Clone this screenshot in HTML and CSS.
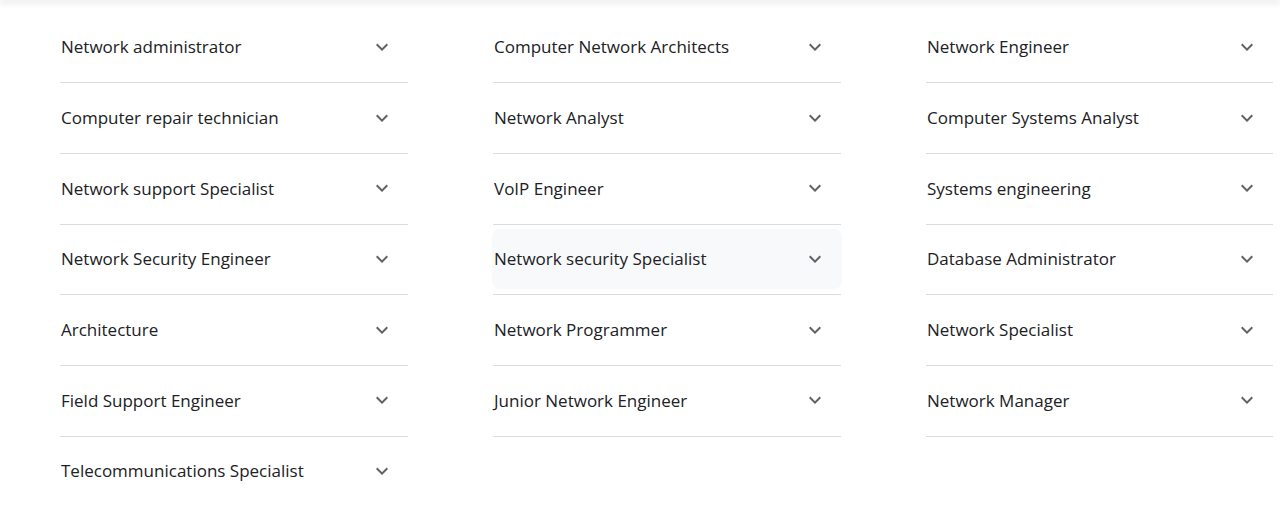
FILE: index.html
```html
<!DOCTYPE html>
<html>
<head>
<meta charset="utf-8">
<link rel="stylesheet" href="styles.css">
</head>
<body>
<div class="topbar"></div>
<main class="grid">
  <div class="col">
    <div class="row"><div class="item"><span>Network administrator</span><svg class="chev" viewBox="0 0 24 24"><path d="M16.59 8.59L12 13.17 7.41 8.59 6 10l6 6 6-6z"/></svg></div></div>
    <div class="row"><div class="item"><span>Computer repair technician</span><svg class="chev" viewBox="0 0 24 24"><path d="M16.59 8.59L12 13.17 7.41 8.59 6 10l6 6 6-6z"/></svg></div></div>
    <div class="row"><div class="item"><span>Network support Specialist</span><svg class="chev" viewBox="0 0 24 24"><path d="M16.59 8.59L12 13.17 7.41 8.59 6 10l6 6 6-6z"/></svg></div></div>
    <div class="row"><div class="item"><span>Network Security Engineer</span><svg class="chev" viewBox="0 0 24 24"><path d="M16.59 8.59L12 13.17 7.41 8.59 6 10l6 6 6-6z"/></svg></div></div>
    <div class="row"><div class="item"><span>Architecture</span><svg class="chev" viewBox="0 0 24 24"><path d="M16.59 8.59L12 13.17 7.41 8.59 6 10l6 6 6-6z"/></svg></div></div>
    <div class="row"><div class="item"><span>Field Support Engineer</span><svg class="chev" viewBox="0 0 24 24"><path d="M16.59 8.59L12 13.17 7.41 8.59 6 10l6 6 6-6z"/></svg></div></div>
    <div class="row last"><div class="item"><span>Telecommunications Specialist</span><svg class="chev" viewBox="0 0 24 24"><path d="M16.59 8.59L12 13.17 7.41 8.59 6 10l6 6 6-6z"/></svg></div></div>
  </div>
  <div class="col">
    <div class="row"><div class="item"><span>Computer Network Architects</span><svg class="chev" viewBox="0 0 24 24"><path d="M16.59 8.59L12 13.17 7.41 8.59 6 10l6 6 6-6z"/></svg></div></div>
    <div class="row"><div class="item"><span>Network Analyst</span><svg class="chev" viewBox="0 0 24 24"><path d="M16.59 8.59L12 13.17 7.41 8.59 6 10l6 6 6-6z"/></svg></div></div>
    <div class="row"><div class="item"><span>VoIP Engineer</span><svg class="chev" viewBox="0 0 24 24"><path d="M16.59 8.59L12 13.17 7.41 8.59 6 10l6 6 6-6z"/></svg></div></div>
    <div class="row"><div class="item hover"><span>Network security Specialist</span><svg class="chev" viewBox="0 0 24 24"><path d="M16.59 8.59L12 13.17 7.41 8.59 6 10l6 6 6-6z"/></svg></div></div>
    <div class="row"><div class="item"><span>Network Programmer</span><svg class="chev" viewBox="0 0 24 24"><path d="M16.59 8.59L12 13.17 7.41 8.59 6 10l6 6 6-6z"/></svg></div></div>
    <div class="row"><div class="item"><span>Junior Network Engineer</span><svg class="chev" viewBox="0 0 24 24"><path d="M16.59 8.59L12 13.17 7.41 8.59 6 10l6 6 6-6z"/></svg></div></div>
  </div>
  <div class="col">
    <div class="row"><div class="item"><span>Network Engineer</span><svg class="chev" viewBox="0 0 24 24"><path d="M16.59 8.59L12 13.17 7.41 8.59 6 10l6 6 6-6z"/></svg></div></div>
    <div class="row"><div class="item"><span>Computer Systems Analyst</span><svg class="chev" viewBox="0 0 24 24"><path d="M16.59 8.59L12 13.17 7.41 8.59 6 10l6 6 6-6z"/></svg></div></div>
    <div class="row"><div class="item"><span>Systems engineering</span><svg class="chev" viewBox="0 0 24 24"><path d="M16.59 8.59L12 13.17 7.41 8.59 6 10l6 6 6-6z"/></svg></div></div>
    <div class="row"><div class="item"><span>Database Administrator</span><svg class="chev" viewBox="0 0 24 24"><path d="M16.59 8.59L12 13.17 7.41 8.59 6 10l6 6 6-6z"/></svg></div></div>
    <div class="row"><div class="item"><span>Network Specialist</span><svg class="chev" viewBox="0 0 24 24"><path d="M16.59 8.59L12 13.17 7.41 8.59 6 10l6 6 6-6z"/></svg></div></div>
    <div class="row"><div class="item"><span>Network Manager</span><svg class="chev" viewBox="0 0 24 24"><path d="M16.59 8.59L12 13.17 7.41 8.59 6 10l6 6 6-6z"/></svg></div></div>
  </div>
</main>
</body>
</html>
```

FILE: styles.css
```css
* { box-sizing: border-box; }
html, body { margin: 0; padding: 0; background: #fff; }
body {
  width: 1280px;
  height: 514px;
  overflow: hidden;
  font-family: "Open Sans", "Liberation Sans", sans-serif;
  color: #202124;
}
.topbar {
  height: 0;
  box-shadow: 0 1px 6px 1px rgba(60, 64, 67, 0.25);
}
.grid {
  display: grid;
  grid-template-columns: 348px 348px 347px;
  column-gap: 85px;
  padding: 12.5px 0 0 60px;
}
.col { display: flex; flex-direction: column; }
.row {
  height: 70.7px;
  border-bottom: 1px solid #dadce0;
  padding: 4px 0 5px;
}
.row.last { border-bottom: none; }
.item {
  height: 60.7px;
  display: flex;
  align-items: center;
  justify-content: space-between;
  padding: 0 14px 0 1px;
  border-radius: 8px;
  font-size: 17px;
  color: #202124;
}
.item.hover {
  background: #f8f9fa;
  margin: 0 -1px;
  padding-left: 2px;
  padding-right: 15px;
}
.chev {
  width: 24px;
  height: 24px;
  fill: #5f6368;
  flex: none;
}
```
